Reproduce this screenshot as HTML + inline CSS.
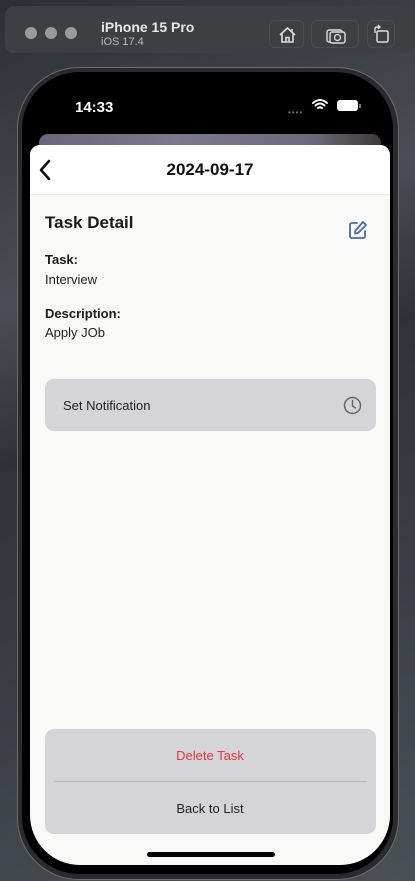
<!DOCTYPE html>
<html><head><meta charset="utf-8"><style>
*{margin:0;padding:0;box-sizing:border-box}
body{width:415px;height:881px;overflow:hidden;position:relative;font-family:"Liberation Sans",sans-serif;
background:linear-gradient(160deg,#2c3034 0%,#4a4e53 30%,#2f3337 45%,#3b3f44 70%,#4b5055 100%);}
.bar{position:absolute;left:5px;top:6px;width:410px;height:47px;background:#3d3f42;border-radius:9px;}
.dot{position:absolute;top:21px;width:12px;height:12px;border-radius:50%;background:#9a9a9a}
.t1{position:absolute;left:96px;top:13px;color:#e8e8e8;font-weight:bold;font-size:14px}
.t2{position:absolute;left:96px;top:30px;color:#bdbdbd;font-size:11px}
.btn{position:absolute;top:14px;height:28px;border:1px solid #4a4c50;border-radius:6px}
.frame{position:absolute;left:17px;top:67px;width:382px;height:813px;border-radius:62px;background:#2a2b2d;border:1.5px solid #6a6c70}
.black{position:absolute;left:22px;top:72px;width:371px;height:802px;border-radius:57px;background:#000}
.screen{position:absolute;left:30px;top:80px;width:360px;height:785px;border-radius:50px;background:#000;overflow:hidden}
.sheet{position:absolute;left:0;top:65px;width:360px;height:720px;background:#f9f9f7;border-radius:10px 10px 0 0}
.peek{position:absolute;left:9px;top:54px;width:342px;height:30px;border-radius:9px;background:linear-gradient(90deg,#6b6679,#7d778c 40%,#6d697c 80%,#3c3a35)}
</style></head><body>
<div class="bar">
<div class="dot" style="left:20px"></div><div class="dot" style="left:40px"></div><div class="dot" style="left:60px"></div>
<div class="t1">iPhone 15 Pro</div><div class="t2">iOS 17.4</div>
<div class="btn" style="left:264px;width:35px"><svg width="35" height="28" viewBox="0 0 35 28"><path d="M10 14 L17.5 7 L25 14 M12 12.5 V21 H23 V12.5 M16 21 V16.5 H19 V21 M22 8 V10.5" fill="none" stroke="#ddd" stroke-width="1.6"/></svg></div>
<div class="btn" style="left:306px;width:48px"><svg width="48" height="28" viewBox="0 0 48 28"><rect x="15" y="9" width="15" height="12" rx="2" fill="none" stroke="#ddd" stroke-width="1.4"/><rect x="18" y="11" width="15" height="11" rx="2" fill="#3d3f42" stroke="#ddd" stroke-width="1.4"/><circle cx="25.5" cy="16.5" r="3" fill="none" stroke="#ddd" stroke-width="1.3"/></svg></div>
<div class="btn" style="left:362px;width:28px"><svg width="28" height="28" viewBox="0 0 28 28"><rect x="9" y="10" width="11" height="11" rx="1.5" fill="none" stroke="#ddd" stroke-width="1.5"/><path d="M7 12 V8 Q7 6 9 6 H12 M10 4 L12 6 L10 8" fill="none" stroke="#ddd" stroke-width="1.4"/></svg></div>
</div>
<div class="frame"></div>
<div class="black"></div>
<div class="screen">
<div style="position:absolute;left:45px;top:19px;color:#fff;font-size:15px;font-weight:bold">14:33</div>
<div style="position:absolute;left:258px;top:28px;color:#777;font-size:8px;letter-spacing:1px">••••</div>
<svg style="position:absolute;left:282px;top:18px" width="16" height="13" viewBox="0 0 16 13"><path d="M1 5 Q8 -1 15 5 M3.5 7.5 Q8 3.5 12.5 7.5 M6 10 Q8 8.5 10 10" fill="none" stroke="#fff" stroke-width="2" stroke-linecap="round"/></svg>
<div style="position:absolute;left:307px;top:20px;width:21px;height:11px;border-radius:3px;background:#fff"></div>
<div style="position:absolute;left:329px;top:24px;width:2px;height:4px;background:#777"></div>
<div class="peek"></div>
<div class="sheet">
<div style="position:absolute;left:0;top:0;width:360px;height:50px;background:#fff;border-radius:10px 10px 0 0;border-bottom:1px solid #ececec"></div>
<svg style="position:absolute;left:8px;top:14px" width="14" height="22" viewBox="0 0 14 22"><path d="M11 2 L3 11 L11 20" fill="none" stroke="#111" stroke-width="2.6" stroke-linecap="round" stroke-linejoin="round"/></svg>
<div style="position:absolute;left:0;width:360px;top:15px;text-align:center;font-size:17px;font-weight:bold;color:#111">2024-09-17</div>
<div style="position:absolute;left:15px;top:68px;font-size:17px;font-weight:bold;color:#1a1a1a">Task Detail</div>
<svg style="position:absolute;left:318px;top:75px" width="20" height="20" viewBox="0 0 20 20"><path d="M9 3 H4 Q2 3 2 5 V16 Q2 18 4 18 H15 Q17 18 17 16 V11" fill="none" stroke="#4a6aa0" stroke-width="1.8" stroke-linecap="round"/><path d="M15 2 L18 5 L10 13 L7 13.5 L7.5 10.5 Z" fill="none" stroke="#4a6aa0" stroke-width="1.8" stroke-linejoin="round"/></svg>
<div style="position:absolute;left:15px;top:107px;font-size:13px;font-weight:bold;color:#1a1a1a">Task:</div>
<div style="position:absolute;left:15px;top:127px;font-size:13px;color:#222">Interview</div>
<div style="position:absolute;left:15px;top:161px;font-size:13px;font-weight:bold;color:#1a1a1a">Description:</div>
<div style="position:absolute;left:15px;top:180px;font-size:13px;color:#222">Apply JOb</div>
<div style="position:absolute;left:15px;top:234px;width:331px;height:52px;background:#d5d4d9;border-radius:9px"></div>
<div style="position:absolute;left:33px;top:253px;font-size:13px;color:#222">Set Notification</div>
<svg style="position:absolute;left:313px;top:251px" width="19" height="19" viewBox="0 0 19 19"><circle cx="9.5" cy="9.5" r="8" fill="none" stroke="#666" stroke-width="1.5"/><path d="M9.5 4.5 V10 L12.5 12" fill="none" stroke="#666" stroke-width="1.5" stroke-linecap="round"/></svg>
<div style="position:absolute;left:15px;top:584px;width:331px;height:105px;background:#d5d4d9;border-radius:9px"></div>
<div style="position:absolute;left:24px;top:636px;width:313px;height:1px;background:#b9b8bd"></div>
<div style="position:absolute;left:0;width:360px;top:603px;text-align:center;font-size:13px;color:#e0393b">Delete Task</div>
<div style="position:absolute;left:0;width:360px;top:656px;text-align:center;font-size:13px;color:#222">Back to List</div>
<div style="position:absolute;left:117px;top:707px;width:128px;height:5px;border-radius:3px;background:#000"></div>
</div>
</div>
</body></html>
